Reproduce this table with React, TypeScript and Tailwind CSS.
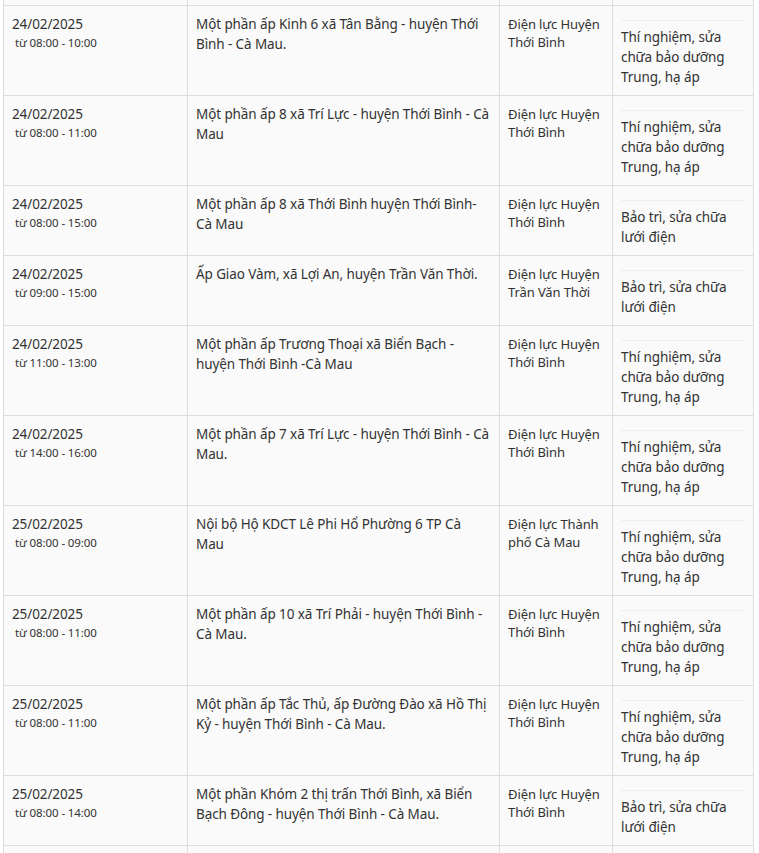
import React from 'react';

type Row = {
  date: string;
  time: string;
  area: string[];
  unit: string[];
  reason: string[];
};

const THOI_BINH = ['Điện lực Huyện', 'Thới Bình'];
const TEST = ['Thí nghiệm, sửa', 'chữa bảo dưỡng', 'Trung, hạ áp'];
const REPAIR = ['Bảo trì, sửa chữa', 'lưới điện'];

const rows: Row[] = [
  { date: '24/02/2025', time: 'từ 08:00 - 10:00', area: ['Một phần ấp Kinh 6 xã Tân Bằng - huyện Thới', 'Bình - Cà Mau.'], unit: THOI_BINH, reason: TEST },
  { date: '24/02/2025', time: 'từ 08:00 - 11:00', area: ['Một phần ấp 8 xã Trí Lực - huyện Thới Bình - Cà', 'Mau'], unit: THOI_BINH, reason: TEST },
  { date: '24/02/2025', time: 'từ 08:00 - 15:00', area: ['Một phần ấp 8 xã Thới Bình huyện Thới Bình-', 'Cà Mau'], unit: THOI_BINH, reason: REPAIR },
  { date: '24/02/2025', time: 'từ 09:00 - 15:00', area: ['Ấp Giao Vàm, xã Lợi An, huyện Trần Văn Thời.'], unit: ['Điện lực Huyện', 'Trần Văn Thời'], reason: REPAIR },
  { date: '24/02/2025', time: 'từ 11:00 - 13:00', area: ['Một phần ấp Trương Thoại xã Biển Bạch -', 'huyện Thới Bình -Cà Mau'], unit: THOI_BINH, reason: TEST },
  { date: '24/02/2025', time: 'từ 14:00 - 16:00', area: ['Một phần ấp 7 xã Trí Lực - huyện Thới Bình - Cà', 'Mau.'], unit: THOI_BINH, reason: TEST },
  { date: '25/02/2025', time: 'từ 08:00 - 09:00', area: ['Nội bộ Hộ KDCT Lê Phi Hổ Phường 6 TP Cà', 'Mau'], unit: ['Điện lực Thành', 'phố Cà Mau'], reason: TEST },
  { date: '25/02/2025', time: 'từ 08:00 - 11:00', area: ['Một phần ấp 10 xã Trí Phải - huyện Thới Bình -', 'Cà Mau.'], unit: THOI_BINH, reason: TEST },
  { date: '25/02/2025', time: 'từ 08:00 - 11:00', area: ['Một phần ấp Tắc Thủ, ấp Đường Đào xã Hồ Thị', 'Kỷ - huyện Thới Bình - Cà Mau.'], unit: THOI_BINH, reason: TEST },
  { date: '25/02/2025', time: 'từ 08:00 - 14:00', area: ['Một phần Khóm 2 thị trấn Thới Bình, xã Biển', 'Bạch Đông - huyện Thới Bình - Cà Mau.'], unit: THOI_BINH, reason: REPAIR },
];

const cell = 'border border-[#dddddd] px-2 py-2 align-top';

const Lines = ({ lines }: { lines: string[] }) => (
  <>
    {lines.map((l, i) => (
      <div key={i} className="whitespace-nowrap">
        {l}
      </div>
    ))}
  </>
);

export default function App() {
  return (
    <div className="min-h-screen bg-white pl-[3px] text-[13.5px] leading-5 tracking-[-0.1px] text-[#333]" style={{ fontFamily: '"Noto Sans", "Open Sans", sans-serif' }}>
      <table className="w-[750px] table-fixed border-collapse bg-[#fafafa]">
        <colgroup>
          <col className="w-[184px]" />
          <col className="w-[312px]" />
          <col className="w-[113px]" />
          <col className="w-[141px]" />
        </colgroup>
        <tbody>
          {/* tail of the row above, cut off by the top of the page */}
          <tr className="h-[5px]">
            <td className="border-x border-b border-[#dddddd] p-0" />
            <td className="border-x border-b border-[#dddddd] p-0" />
            <td className="border-x border-b border-[#dddddd] p-0" />
            <td className="border-x border-b border-[#dddddd] p-0" />
          </tr>
          {rows.map((r, i) => (
            <tr key={i}>
              <td className={cell}>
                <div>{r.date}</div>
                <div className="pl-[3px] text-[11.5px] leading-[18px]">{r.time}</div>
              </td>
              <td className={cell}>
                <Lines lines={r.area} />
              </td>
              <td className={cell}>
                <div className="pt-[1px] text-[13px] leading-[18px]">
                  <Lines lines={r.unit} />
                </div>
              </td>
              <td className={cell}>
                <div className="mt-[6px] border-t border-[#eeeeee] pt-[6px]">
                  <Lines lines={r.reason} />
                </div>
              </td>
            </tr>
          ))}
          <tr className="h-[40px]">
            <td className={cell} />
            <td className={cell} />
            <td className={cell} />
            <td className={cell} />
          </tr>
        </tbody>
      </table>
    </div>
  );
}
